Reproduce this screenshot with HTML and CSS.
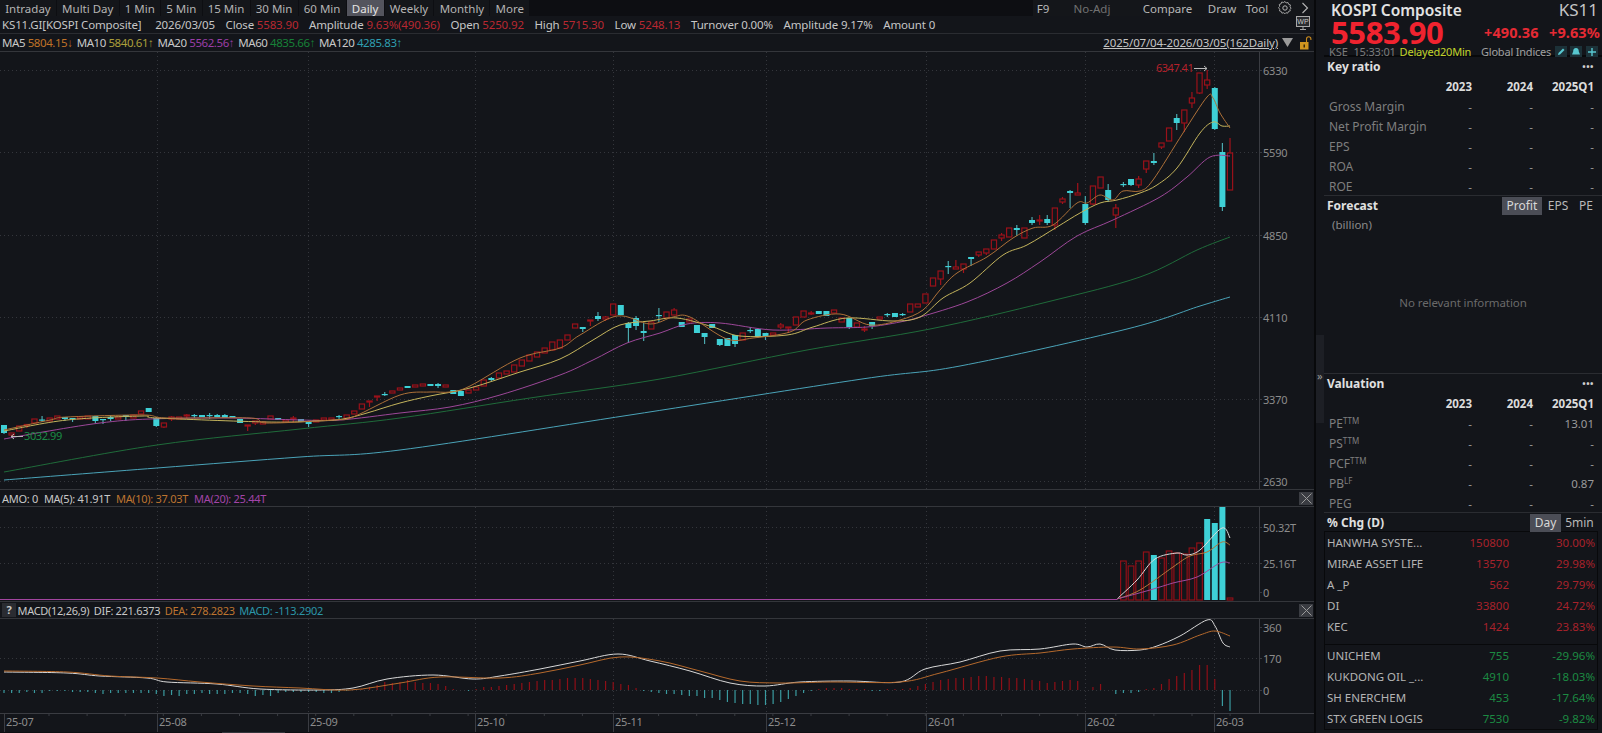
FILE: index.html
```html
<!DOCTYPE html>
<html lang="en">
<head>
<meta charset="utf-8">
<title>KOSPI Composite</title>
<link rel="stylesheet" href="styles.css">
</head>
<body>
<div class="app">
  <main class="chart-area">
    <div class="toolbar">
      <nav class="tabs">
        <span class="tab">Intraday</span><span class="tab">Multi Day</span><span class="tab">1 Min</span><span class="tab">5 Min</span><span class="tab">15 Min</span><span class="tab">30 Min</span><span class="tab">60 Min</span><span class="tab active">Daily</span><span class="tab">Weekly</span><span class="tab">Monthly</span><span class="tab">More</span>
      </nav>
      <div class="tools">
        <span class="tool t-f9">F9</span><span class="tool t-adj dim">No-Adj</span><span class="tool t-cmp">Compare</span><span class="tool t-draw">Draw</span><span class="tool t-tool">Tool</span>
        <span class="tool t-gear"><svg class="ico" width="14" height="14" viewBox="0 0 14 14"><circle cx="7" cy="7" r="2.2" fill="none" stroke="#b5b5b5"/><path d="M7 1l1.2 1.6 2-.5.7 1.9 1.9.7-.5 2 1.2 1.3-1.2 1.3.3 1.6-1.9.6-.7 1.8-2-.4L7 14 5.800 12.900l-2 .4-.7-1.800-1.900-.6.3-1.600L.300 7.500 1.500 6.200 1 4.200l1.900-.7.700-1.900 2 .5z" transform="translate(.3 -.5) scale(.95)" fill="none" stroke="#b5b5b5" stroke-width=".9"/></svg></span>
        <span class="tool t-next"><svg class="ico" width="8" height="12" viewBox="0 0 8 12"><path d="M1.500 1l5 5-5 5" fill="none" stroke="#b5b5b5" stroke-width="1.100"/></svg></span>
      </div>
    </div>
    <div class="info-row">
      <div class="info">
        <span class="i-name">KS11.GI[KOSPI Composite]</span>
        <span class="i-date">2026/03/05</span>
        <span>Close <b class="up">5583.90</b></span>
        <span>Amplitude <b class="up">9.63%(490.36)</b></span>
        <span>Open <b class="up">5250.92</b></span>
        <span>High <b class="up">5715.30</b></span>
        <span>Low <b class="up">5248.13</b></span>
        <span>Turnover 0.00%</span>
        <span>Amplitude 9.17%</span>
        <span>Amount 0</span>
      </div>
      <svg class="wp" width="14" height="15" viewBox="0 0 14 15"><rect x=".5" y=".5" width="13" height="10" fill="#2a2c30" stroke="#a8a8a8"/><text x="7" y="8" class="wp-text">WP</text><path d="M4 13.500h6M7 11v2" stroke="#a8a8a8"/></svg>
    </div>
    <div class="ma-row">
      <div class="mas">
        <span>MA5 <b class="c-ma5">5804.15↓</b></span>
        <span>MA10 <b class="c-ma10">5840.61↑</b></span>
        <span>MA20 <b class="c-ma20">5562.56↑</b></span>
        <span>MA60 <b class="c-ma60">4835.66↑</b></span>
        <span>MA120 <b class="c-ma120">4285.83↑</b></span>
      </div>
      <div class="range">
        <span class="range-text">2025/07/04-2026/03/05(162Daily)</span>
        <svg width="11" height="9" viewBox="0 0 11 9"><path d="M0 0h11L5.500 9z" fill="#9a9a9a"/></svg>
        <svg width="12" height="14" viewBox="0 0 12 14"><path d="M6.500 6V3a2.200 2.200 0 0 1 4.400 0v1" fill="none" stroke="#c98a1e" stroke-width="1.100"/><rect x="0" y="6" width="8.500" height="7.500" fill="#d1951f"/><rect x="3.500" y="8.500" width="1.500" height="3" fill="#3a2a08"/></svg>
      </div>
    </div>
    <svg class="pane pane-main" id="pane-main" viewBox="0 52 1314 437" width="1314" height="437"></svg>
    <div class="pane-head">
      <span>AMO: 0</span><span>MA(5): 41.91T</span><span class="c-orange">MA(10): 37.03T</span><span class="c-purple">MA(20): 25.44T</span>
      <span class="close"><svg width="11" height="11" viewBox="0 0 11 11"><path d="M.5.500l10 10M10.500.500l-10 10" stroke="#9a9a9a"/></svg></span>
    </div>
    <svg class="pane pane-vol" id="pane-vol" viewBox="0 507 1314 94" width="1314" height="94"></svg>
    <div class="pane-head head-macd">
      <span class="help">?</span><span>MACD(12,26,9)</span><span>DIF: 221.6373</span><span class="c-orange">DEA: 278.2823</span><span class="c-teal">MACD: -113.2902</span>
      <span class="close"><svg width="11" height="11" viewBox="0 0 11 11"><path d="M.5.500l10 10M10.500.500l-10 10" stroke="#9a9a9a"/></svg></span>
    </div>
    <svg class="pane pane-macd" id="pane-macd" viewBox="0 618 1314 94" width="1314" height="94"></svg>
    <svg class="pane pane-x" id="pane-x" viewBox="0 712 1314 19" width="1314" height="19"></svg>
    <div class="scrollbar"><span class="thumb thumb-a"></span></div>
  </main>

  <aside class="side">
    <div class="handle"><span>»</span></div>
    <header class="quote">
      <div class="q-top"><span class="q-name">KOSPI Composite</span><span class="q-code">KS11</span></div>
      <div class="q-mid"><span class="q-price">5583.90</span><span class="q-chg">+490.36</span><span class="q-pct">+9.63%</span></div>
      <div class="q-bot">
        <span class="q-ex">KSE</span><span class="q-time">15:33:01</span><span class="q-delay">Delayed20Min</span><span class="q-global">Global Indices</span>
        <span class="q-ico"><svg width="10" height="10" viewBox="0 0 10 10"><path d="M2 8l.5-2L7 1.500 8.500 3 4 7.500z" fill="#58c8d0"/></svg></span>
        <span class="q-ico"><svg width="10" height="10" viewBox="0 0 10 10"><path d="M5 1c2 0 2.800 1.500 2.800 3.500L9 7.500H1l1.200-3C2.200 2.500 3 1 5 1z" fill="#58c8d0"/></svg></span>
        <span class="q-ico"><svg width="10" height="10" viewBox="0 0 10 10"><path d="M5 1v8M1 5h8" stroke="#58c8d0" stroke-width="1.400"/></svg></span>
      </div>
    </header>

    <section class="block key">
      <div class="b-title"><span>Key ratio</span><span class="dots">•••</span></div>
      <div class="grid-table">
        <span></span><b>2023</b><b>2024</b><b>2025Q1</b>
        <span class="lab">Gross Margin</span><i>-</i><i>-</i><i>-</i>
        <span class="lab">Net Profit Margin</span><i>-</i><i>-</i><i>-</i>
        <span class="lab">EPS</span><i>-</i><i>-</i><i>-</i>
        <span class="lab">ROA</span><i>-</i><i>-</i><i>-</i>
        <span class="lab">ROE</span><i>-</i><i>-</i><i>-</i>
      </div>
    </section>

    <section class="block forecast">
      <div class="b-title b-tabbed"><span>Forecast</span>
        <span class="seg"><span class="seg-on s-profit">Profit</span><span class="s-eps">EPS</span><span class="s-pe">PE</span></span>
      </div>
      <div class="billion">(billion)</div>
      <div class="empty">No relevant information</div>
    </section>

    <section class="block valuation">
      <div class="b-title"><span>Valuation</span><span class="dots">•••</span></div>
      <div class="grid-table">
        <span></span><b>2023</b><b>2024</b><b>2025Q1</b>
        <span class="lab">PE<sup>TTM</sup></span><i>-</i><i>-</i><i>13.01</i>
        <span class="lab">PS<sup>TTM</sup></span><i>-</i><i>-</i><i>-</i>
        <span class="lab">PCF<sup>TTM</sup></span><i>-</i><i>-</i><i>-</i>
        <span class="lab">PB<sup>LF</sup></span><i>-</i><i>-</i><i>0.87</i>
        <span class="lab">PEG</span><i>-</i><i>-</i><i>-</i>
      </div>
    </section>

    <section class="block chg">
      <div class="b-title b-tabbed"><span>% Chg (D)</span>
        <span class="seg"><span class="seg-on s-day">Day</span><span class="s-5m">5min</span></span>
      </div>
      <div class="movers">
        <div class="mv-group mv-up">
          <div class="mv"><span>HANWHA SYSTE...</span><span>150800</span><span>30.00%</span></div>
          <div class="mv"><span>MIRAE ASSET LIFE</span><span>13570</span><span>29.98%</span></div>
          <div class="mv"><span>A _P</span><span>562</span><span>29.79%</span></div>
          <div class="mv"><span>DI</span><span>33800</span><span>24.72%</span></div>
          <div class="mv"><span>KEC</span><span>1424</span><span>23.83%</span></div>
        </div>
        <div class="mv-group mv-down">
          <div class="mv"><span>UNICHEM</span><span>755</span><span>-29.96%</span></div>
          <div class="mv"><span>KUKDONG OIL _...</span><span>4910</span><span>-18.03%</span></div>
          <div class="mv"><span>SH ENERCHEM</span><span>453</span><span>-17.64%</span></div>
          <div class="mv"><span>STX GREEN LOGIS</span><span>7530</span><span>-9.82%</span></div>
        </div>
      </div>
    </section>
  </aside>
</div>
<script src="chart.js"></script>
</body>
</html>
```
FILE: styles.css
```css
* { box-sizing: border-box; }
html, body { margin: 0; padding: 0; height: 100%; background: #13151a; overflow: hidden; }
body { font-family: "Noto Sans", "Open Sans", sans-serif; font-size: 11.5px; color: #c8c8c8; }
b, i { font-weight: normal; font-style: normal; }
.app { display: flex; width: 1602px; height: 733px; }

.chart-area { width: 1316px; border-right: 2px solid #08090b; display: flex; flex-direction: column; flex: none; }
.toolbar { display: flex; justify-content: space-between; height: 16px; background: #0d0e12; }
.tabs { display: flex; gap: 1px; }
.tab { display: flex; align-items: center; padding: 0 5.200px; background: #14161a; color: #b4b4b4; line-height: 15px; height: 16px; white-space: nowrap; }
.tab.active { background: #53545d; color: #e4e4e4; }
.tools { display: flex; }
.tool { display: flex; align-items: center; justify-content: center; height: 16px; background: #14161a; color: #b8b8b8; }
.tool.dim { color: #727272; }
.t-f9 { width: 20px; } .t-adj { width: 78px; } .t-cmp { width: 73px; } .t-draw { width: 36px; } .t-tool { width: 34px; } .t-gear { width: 22px; } .t-next { width: 18px; }

.info-row { display: flex; justify-content: space-between; align-items: center; height: 18px; padding: 0 2px; border-bottom: 1px solid #2a2c31; }
.info { display: flex; white-space: nowrap; gap: 10.700px; color: #c6c6c6; letter-spacing: -.15px; }
.i-date { margin-left: 3px; }
.up { color: #b92831; }
.wp { margin-right: 2px; margin-top: -3px; }
.wp-text { font-size: 7px; fill: #c8c8c8; text-anchor: middle; font-family: "Liberation Sans", sans-serif; }
.ma-row { display: flex; justify-content: space-between; align-items: center; height: 18px; padding: 0 2px; border-bottom: 1px solid #34363b; }
.mas { display: flex; gap: 4px; white-space: nowrap; letter-spacing: -.42px; }
.c-ma5 { color: #bf7228; } .c-ma10 { color: #ab9f3a; } .c-ma20 { color: #9a3ea6; } .c-ma60 { color: #178038; } .c-ma120 { color: #2f9fb0; }
.range { display: flex; align-items: center; gap: 4px; }
.range-text { color: #c4c4c4; text-decoration: underline; letter-spacing: -.15px; }
.range svg:last-child { margin-left: 3px; }

.pane { display: block; flex: none; }
.pane text { font-family: "Noto Sans", "Open Sans", sans-serif; font-size: 11px; letter-spacing: -.2px; fill: #8c8c8c; }
.pane .hi { fill: #b5212b; letter-spacing: -.5px; }
.pane .lo { fill: #1b8a45; letter-spacing: -.4px; }
.pane-head { display: flex; gap: 6px; align-items: center; height: 18px; padding: 0 2px; font-size: 11px; letter-spacing: -.3px; border-top: 1px solid #34363b; border-bottom: 1px solid #34363b; position: relative; white-space: nowrap; }
.c-orange { color: #bd7430; } .c-purple { color: #a244a8; } .c-teal { color: #2b95a8; }
.close { position: absolute; right: 1px; top: 2px; width: 14px; height: 13px; background: #3a3c42; display: flex; align-items: center; justify-content: center; }
.head-macd { gap: 4.500px; }
.help { width: 14px; height: 14px; background: #2a2c32; text-align: center; line-height: 14px; margin-right: -3px; font-weight: bold; }
.scrollbar { flex: 1; background: #0d0e12; position: relative; }
.thumb { position: absolute; top: 0; bottom: 0; background: #33353b; }
.thumb-a { left: 222px; width: 63px; }

.side { flex: 1; min-width: 0; position: relative; padding-left: 8px; display: flex; flex-direction: column; }
.handle { position: absolute; left: 0; top: 335px; width: 8px; height: 88px; background: #1d1f25; color: #999; font-size: 11px; line-height: 11px; }
.handle span { position: absolute; top: 35px; left: 1px; }

.quote { height: 57px; border-bottom: 2px solid #08090b; padding: 0 1px 0 5px; }
.q-top { display: flex; justify-content: space-between; height: 20px; align-items: center; padding: 0 3px 0 2px; line-height: 18px; }
.q-name { font-size: 15.5px; font-weight: 600; color: #e2e2e2; }
.q-code { font-size: 17px; color: #c4c4c4; }
.q-mid { display: flex; align-items: center; height: 24px; padding-left: 2px; }
.q-price { font-size: 31px; font-weight: 700; color: #f0232f; line-height: 24px; width: 153px; font-family: "Open Sans", sans-serif; letter-spacing: -.4px; }
.q-chg, .q-pct { font-size: 14.5px; font-weight: 700; color: #e52a34; letter-spacing: .1px; white-space: nowrap; }
.q-chg { width: 65px; }
.q-bot { display: flex; align-items: center; height: 11px; margin-top: 2px; font-size: 11px; line-height: 11px; color: #7c7c7c; white-space: nowrap; }
.q-ex { width: 25px; } .q-time { width: 47px; letter-spacing: -.2px; }
.q-delay { color: #c2d42a; width: 83px; letter-spacing: -.2px; }
.q-global { color: #a0a0a0; width: 75px; letter-spacing: -.2px; }
.q-ico { width: 12px; height: 11px; background: #1c3138; margin-right: 3.500px; display: flex; align-items: center; justify-content: center; flex: none; }

.block { border-bottom: 1px solid #2a2c31; position: relative; padding-left: 3px; }
.key { height: 139px; } .forecast { height: 178px; } .valuation { height: 139px; } .chg { flex: 1; border-bottom: 0; }
.b-title { display: flex; justify-content: space-between; align-items: center; height: 19px; padding-right: 8px; color: #e0e0e0; font-weight: 700; font-size: 12px; }
.dots { font-size: 9px; letter-spacing: .5px; color: #d0d0d0; }
.b-tabbed { padding-right: 4px; }
.grid-table { display: grid; grid-template-columns: 84px 61px 61px 61px; grid-auto-rows: 20.150px; align-items: center; }
.grid-table > b { text-align: right; font-weight: 700; color: #dcdcdc; }
.grid-table > i { text-align: right; color: #9a9a9a; }
.lab { padding-left: 2px; color: #7e7e7e; font-size: 12px; white-space: nowrap; }
.lab sup { font-size: 8px; line-height: 0; vertical-align: 4px; }
.seg { display: flex; height: 18px; font-weight: 400; color: #b8b8b8; }
.seg > span { display: flex; align-items: center; justify-content: center; }
.seg-on { background: #4b4d56; color: #d8d8d8; }
.s-profit { width: 40px; } .s-eps { width: 32px; } .s-pe { width: 24px; }
.s-day { width: 31px; } .s-5m { width: 37px; }
.billion { padding-left: 5px; color: #8a8a8a; line-height: 18px; margin-top: 1px; }
.empty { position: absolute; left: 0; right: 0; top: 99px; text-align: center; color: #6a6a6a; letter-spacing: -.1px; }
.movers { border: 1px solid #08090b; margin: -1px 4px 0 -3px; }
.mv-up { height: 113px; border-bottom: 1px solid #08090b; }
.mv { display: grid; grid-template-columns: 1fr 60px 86px; height: 21px; align-items: center; padding: 0 2px; }
.mv span:first-child { color: #b4b4b4; white-space: nowrap; }
.mv span:nth-child(n+2) { text-align: right; font-size: 11.5px; }
.mv-up .mv span:nth-child(n+2) { color: #a8222b; }
.mv-down .mv span:nth-child(n+2) { color: #1c8a42; }
```
FILE: chart.js
```js
// Candles in chart pixel space: kind top bottom [wickTop wickBottom]
var CANDLES = ("c 425 433 425 434;r 433 435 433 438;r 426 431;r 424.5 425.5 424 428;r 419 423;c 419.5 420.5 416 422;r 418 421;r 416 419;c 417 419 417 421;c 418 419 418 422;r 417 419;r 416 419;c 416 421 416 423;c 419 420 419 424;c 417 419 415 421;r 417 419;c 415 417 415 421;r 415 418;r 411 414;c 408 412;" +
"c 418 426 417 427;r 423 427 423 428;r 417 419 416 421;r 417 419;r 415 416 414 419;c 415 416 414 418;c 415 417;c 415 416 413 419;c 415 417 414 417;c 415 418 414 418;c 416 418;c 419 423;r 425 426 425 431;r 421 423 421 425;r 422 424;r 416 419;c 418 420;r 420 422;r 418 419 416 422;c 419 422;" +
"c 421 424 421 427;r 420 422;r 418 420;r 418 420;c 416 417 415 420;r 415 418;r 411 414;r 404 409;r 401 402 401 407;r 396 397 396 401;c 394 395 392 396;r 391 393;r 388 390;c 386 388;r 385 387;r 384 386;c 384 386;c 384 386 383 388;r 385 387;c 390 394;" +
"c 391 396;r 390 393;r 387 390;r 380 386;c 378 380 377 381;r 373 378;r 371 374;r 365 372;r 360 366;r 355 361;r 352 357;r 348 353;r 342 350;r 340 348;r 335 340;r 324 328;c 327 329 327 332;r 320 321 320 326;c 316 319 312 321;r 317 319 316 321;" +
"r 304 315;c 305 315;c 323 328 322 343;c 318 326 316 330;c 331 333 323 341;r 322 329;c 315 316 308 322;r 312 318;r 310 315 308 315;c 322 327;r 319 322;c 325 333;c 333 337 333 344;c 324 328;c 339 345 339 346;c 338 346;c 335 344 335 347;r 333 340;c 330 331 327 333;c 329 337 329 338;" +
"c 333 337 333 340;r 333 335;r 325 327 323 329;r 327 328 327 333;r 317 325;r 311 317;r 313 314 311 315;c 311 314;c 311 316;r 310 313;r 318 322;c 318 327 318 329;r 323 327;r 329 330 326 332;c 322 326 322 329;r 317 319;c 314 315 313 317;c 313 317;c 314 315 313 316;r 304 312;" +
"r 304 307;r 294 303;r 278 286;r 271 279 271 285;c 266 267 261 274;r 267 269 260 269;r 264 269 264 273;c 257 259 257 266;r 252 255 252 257;r 249 253 249 255;r 240 249;r 235 238 233 241;r 228 237;c 228 230 225 236;r 228 238;c 220 223 217 225;r 220 221 215 225;c 219 223 215 225;r 208 225 208 230;r 199 202 197 204;" +
"c 191 193 190 208;r 193 195 183 195;c 204 223 196 225;r 186 204 186 205;r 177 188;c 190 200 184 202;r 208 215 204 228;c 184 185 182 187;c 179 185 179 186;r 179 185 176 188;r 161 169 161 173;c 161 163 153 165;r 143 147 143 149;r 128 141;c 118 123 114 130;r 110 123 110 132;r 98 103 92 108;r 73 93 73 94;r 80 85 70 89;c 88 129 87 130;c 152 207 143 211;r 153 190 138 190").split(";");

var LINES = {
  ma120: [[4,480],[157,468],[300,457],[400,450],[630,415],[862,379],[960,366],[1127,329],[1200,306],[1230,297]],
  ma60: [[4,472],[157,445],[300,429],[400,418],[530,398],[660,379],[807,350],[930,329],[1047,302],[1140,277],[1197,250],[1230,237]],
  ma20: [[4,439],[43,432],[100,423],[150,419],[233,418],[300,420],[340,420],[400,413],[450,407],[500,395],[560,375],[593,360],[627,343],[660,333],[687,324],[720,323],[773,330],[827,328],[867,327],[900,322],[920,317],[967,302],[1007,283],[1040,262],[1077,236],[1113,220],[1160,197],[1187,177],[1210,157],[1230,156]],
  ma10: [[4,431],[67,420],[143,416],[157,418],[267,422],[317,421],[343,419],[367,413],[400,403],[430,396],[470,388],[520,372],[560,359],[593,340],[620,325],[650,321],[677,318],[713,327],[740,336],[787,335],[813,327],[847,318],[893,321],[920,317],[943,298],[970,283],[1003,255],[1027,245],[1057,227],[1080,213],[1100,203],[1117,200],[1140,193],[1157,185],[1177,168],[1200,133],[1213,122],[1222,126],[1230,126]],
  ma5: [[4,430],[50,420],[67,417],[143,415],[167,418],[250,418],[267,423],[333,420],[353,417],[400,395],[430,392],[450,392],[470,386],[520,358],[560,348],[580,335],[617,316],[650,324],[673,317],[690,317],[727,339],[753,338],[790,332],[807,320],[840,314],[870,325],[900,320],[923,310],[940,290],[957,273],[987,257],[1013,238],[1033,228],[1053,225],[1077,203],[1087,203],[1100,195],[1113,200],[1123,191],[1140,191],[1153,180],[1183,133],[1207,97],[1213,98],[1220,113],[1230,128]]
};
var COLORS = { ma5: "#ad7038", ma10: "#c4b45c", ma20: "#9c4798", ma60: "#1f6b3a", ma120: "#4aa3b8" };
var VOL = { 147:["r",561],148:["r",566],149:["r",561],150:["r",552],151:["c",555],152:["r",558],153:["r",551],154:["r",553],155:["r",554],156:["r",548],157:["r",543],158:["c",519],159:["c",523],160:["c",507],161:["r",598] };
var HIST = [-3,-3,-3,-2,-3,-3,-1,-1,-1,-2,-2,-2,-3,-4,-3,-3,-3,-3,-3,-3,-4,-6,-5,-6,-4,-4,-3,-4,-4,-4,-3,-3,-4,-6,-5,-6,-3,-2,-2,-2,-2,-2,-3,-3,-2,-1,1,1,3,5,8,7,8,10,8,7,7,6,4,1,0,-1,1,3,3,4,5,6,7,8,9,10,10,11,12,12,12,11,10,9,8,6,5,2,-1,-2,-3,-4,-4,-5,-6,-6,-8,-8,-10,-12,-13,-14,-14,-15,-15,-14,-12,-9,-6,-3,-1,1,2,2,2,1,1,1,-1,-1,1,1,1,2,4,6,8,10,11,12,12,13,14,14,13,13,12,12,11,10,9,7,8,9,10,9,0,3,6,0,-4,-3,-3,-2,1,2,6,11,14,17,20,25,25,11,-16,-21];
var MONTH_X = [157, 308, 475, 613, 766, 926, 1085, 1214];
var MONTH_LABEL = ["25-07", "25-08", "25-09", "25-10", "25-11", "25-12", "26-01", "26-02", "26-03"];

function X(i) { return 4 + i * 7.615; }
function line(x1, y1, x2, y2, c, w, extra) {
  return '<line x1="' + x1 + '" y1="' + y1 + '" x2="' + x2 + '" y2="' + y2 + '" stroke="' + c + '" stroke-width="' + (w || 1) + '"' + (extra || "") + "/>";
}
// Smooth curve through the anchor points (Catmull-Rom to cubic Bezier).
function poly(a, c, w) {
  var d = "M" + a[0][0] + " " + a[0][1];
  for (var i = 0; i < a.length - 1; i++) {
    var p0 = a[Math.max(i - 1, 0)], p1 = a[i], p2 = a[i + 1], p3 = a[Math.min(i + 2, a.length - 1)];
    d += "C" + (p1[0] + (p2[0] - p0[0]) / 6).toFixed(1) + " " + (p1[1] + (p2[1] - p0[1]) / 6).toFixed(1) + " " +
      (p2[0] - (p3[0] - p1[0]) / 6).toFixed(1) + " " + (p2[1] - (p3[1] - p1[1]) / 6).toFixed(1) + " " + p2[0] + " " + p2[1];
  }
  return '<path d="' + d + '" fill="none" stroke="' + c + '" stroke-width="' + (w || 1) + '" stroke-linejoin="round"/>';
}
function text(x, y, s, cls) { return '<text x="' + x + '" y="' + y + '"' + (cls ? ' class="' + cls + '"' : "") + ">" + s + "</text>"; }
var DOT = ' stroke-dasharray="1 3"';
function grid(top, bottom, ys) {
  var s = "";
  MONTH_X.forEach(function (x) { s += line(x + .5, top, x + .5, bottom, "#34363c", 1, DOT); });
  ys.forEach(function (y) { s += line(0, y + .5, 1259, y + .5, "#34363c", 1, DOT); });
  s += line(1259.5, top, 1259.5, bottom, "#3a3c42");
  return s;
}
function labels(items) {
  return items.map(function (l) { return line(1259, l[1] + .5, 1262, l[1] + .5, "#3a3c42") + text(1263, l[1] + 4.5, l[0]); }).join("");
}

// main pane
(function () {
  var s = grid(52, 489, [70, 152, 235, 317, 399, 481]);
  ["ma120", "ma60"].forEach(function (k) { s += poly(LINES[k], COLORS[k]); });
  CANDLES.forEach(function (c, i) {
    var p = c.split(" "), t = +p[1], b = +p[2], wt = p[3] ? +p[3] : t, wb = p[4] ? +p[4] : b, x = X(i);
    if (p[0] === "r") {
      s += line(x, wt, x, t, "#a3121b", 1.2) + line(x, b, x, wb, "#a3121b", 1.2);
      s += '<rect x="' + (x - 2.6) + '" y="' + t + '" width="5.2" height="' + Math.max(b - t, 1) + '" fill="#13151a" stroke="#9a111a" stroke-width="1.2"/>';
    } else {
      s += line(x, wt, x, wb, "#4ba9ae", 1.2);
      s += '<rect x="' + (x - 3) + '" y="' + t + '" width="6" height="' + Math.max(b - t, 1.2) + '" fill="#3ed0d6"/>';
    }
  });
  ["ma20", "ma10", "ma5"].forEach(function (k) { s += poly(LINES[k], COLORS[k]); });
  s += text(1156, 72, "6347.41", "hi") + '<path d="M1194 68.500h13m-3-2.500l3 2.500-3 2.500" fill="none" stroke="#b8b8b8"/>';
  s += text(24, 440, "3032.99", "lo") + '<path d="M23 436.500H11m3-2.500l-3 2.500 3 2.500" fill="none" stroke="#b8b8b8"/>';
  s += labels([["6330", 70], ["5590", 152], ["4850", 235], ["4110", 317], ["3370", 399], ["2630", 481]]);
  document.getElementById("pane-main").innerHTML = s;
})();

// volume pane
(function () {
  var s = grid(507, 601, [527, 563]);
  s += line(0, 599.5, 1117, 599.5, "#a2449f", 1.2);
  Object.keys(VOL).forEach(function (k) {
    var v = VOL[k], x = X(+k);
    if (v[0] === "c") s += '<rect x="' + (x - 3) + '" y="' + v[1] + '" width="6" height="' + (600 - v[1]) + '" fill="#3ed0d6"/>';
    else s += '<rect x="' + (x - 2.8) + '" y="' + v[1] + '" width="5.6" height="' + (600 - v[1]) + '" fill="none" stroke="#8f0f17" stroke-width="1.2"/>';
  });
  s += poly([[1117, 599], [1137, 580], [1155, 559], [1177, 553], [1187, 555], [1200, 550], [1222, 528], [1230, 538]], "#dcdcdc");
  s += poly([[1117, 599], [1140, 590], [1173, 567], [1190, 556], [1207, 552], [1222, 542], [1230, 545]], "#b5763a");
  s += poly([[1117, 599], [1150, 590], [1173, 583], [1197, 577], [1220, 563], [1230, 563]], "#a04a9e");
  s += labels([["50.32T", 527], ["25.16T", 563], ["0", 592]]);
  document.getElementById("pane-vol").innerHTML = s;
})();

// MACD pane
(function () {
  var s = grid(618, 712, [657, 689]);
  HIST.forEach(function (h, i) {
    if (h !== 0) s += line(X(i), 689, X(i), 689 - h, h > 0 ? "#8f0f17" : "#3a9ba0", 1.2);
  });
  s += poly([[4,671],[67,672],[100,675],[147,677],[167,681],[217,683],[260,688],[320,689],[353,687],[387,678],[433,674],[473,678],[500,675],[540,668],[580,660],[618,653],[650,660],[690,670],[730,682],[765,685],[800,681],[850,680],[900,681],[925,668],[960,661],[1000,650],[1040,648],[1073,643],[1087,646],[1100,643],[1115,649],[1140,649],[1157,645],[1180,635],[1207,619],[1215,625],[1223,642],[1230,646]], "#d8d8d8");
  s += poly([[4,670],[67,671],[110,675],[157,677],[200,681],[253,685],[300,687],[350,689],[400,682],[440,676],[500,677],[540,672],[580,664],[620,656],[660,660],[700,670],[740,680],[780,682],[830,681],[900,681],[940,672],[1000,656],[1040,652],[1073,648],[1113,646],[1140,648],[1173,644],[1200,634],[1215,630],[1230,635]], "#b5692c");
  s += labels([["360", 626], ["170", 657], ["0", 689]]);
  document.getElementById("pane-macd").innerHTML = s;
})();

// time axis
(function () {
  var s = line(0, 712.5, 1314, 712.5, "#3a3c42");
  for (var x = 49; x < 1259; x += 38.1) s += line(x, 712, x, 715, "#3a3c42");
  [4].concat(MONTH_X).forEach(function (x, i) {
    s += line(x + .5, 712, x + .5, 731, "#3a3c42");
    s += text(x + 2, 725, MONTH_LABEL[i]);
  });
  document.getElementById("pane-x").innerHTML = s;
})();
```
